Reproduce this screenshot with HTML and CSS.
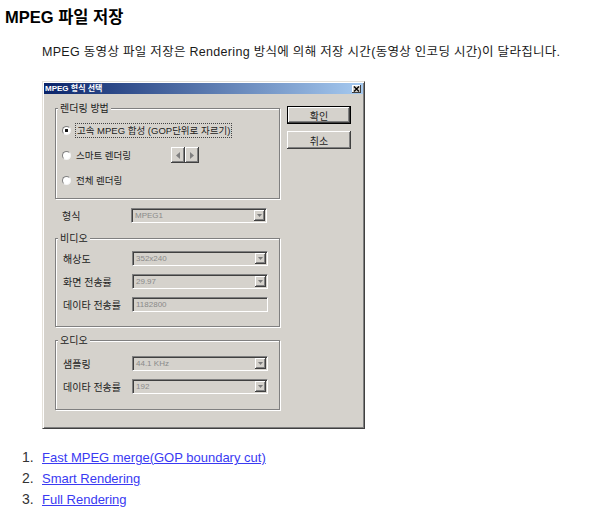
FILE: index.html
```html
<!DOCTYPE html>
<html lang="ko">
<head>
<meta charset="utf-8">
<title>MPEG 파일 저장</title>
<link rel="stylesheet" href="styles.css">
</head>
<body>
<h1 class="title">MPEG 파일 저장</h1>
<p class="intro">MPEG 동영상 파일 저장은 Rendering 방식에 의해 저장 시간(동영상 인코딩 시간)이 달라집니다.</p>

<div class="dialog">
  <div class="titlebar">
    <span class="titletext">MPEG 형식 선택</span>
    <span class="close"><svg width="7" height="6" viewBox="0 0 7 6"><path d="M1 .5 6 5.5M6 .5 1 5.5" stroke="#000" stroke-width="1.3"/></svg></span>
  </div>
  <div class="dbody">
    <div class="leftcol">
      <div class="group g1">
        <div class="legend">렌더링 방법</div>
        <div class="radios">
          <div class="radio-row"><span class="radio checked"></span><span class="rlabel focus">고속 MPEG 합성 (GOP단위로 자르기)</span></div>
          <div class="radio-row"><span class="radio"></span><span class="rlabel fixed">스마트 렌더링</span>
            <span class="spin">
              <span class="spinbtn"><svg width="4" height="7" viewBox="0 0 4 7"><path d="M4 0v7L0 3.5z" fill="#808080"/></svg></span>
              <span class="spinbtn"><svg width="4" height="7" viewBox="0 0 4 7"><path d="M0 0v7L4 3.5z" fill="#808080"/></svg></span>
            </span>
          </div>
          <div class="radio-row"><span class="radio"></span><span class="rlabel">전체 렌더링</span></div>
        </div>
      </div>

      <div class="frow fmt"><span class="flabel">형식</span><span class="combo"><span class="cval">MPEG1</span><span class="cbtn"><svg width="5" height="3" viewBox="0 0 5 3"><path d="M0 0h5L2.5 3z" fill="#7a7a7a"/></svg></span></span></div>

      <div class="group g2">
        <div class="legend">비디오</div>
        <div class="rows">
          <div class="frow"><span class="flabel">해상도</span><span class="combo"><span class="cval">352x240</span><span class="cbtn"><svg width="5" height="3" viewBox="0 0 5 3"><path d="M0 0h5L2.5 3z" fill="#7a7a7a"/></svg></span></span></div>
          <div class="frow"><span class="flabel">화면 전송률</span><span class="combo"><span class="cval">29.97</span><span class="cbtn"><svg width="5" height="3" viewBox="0 0 5 3"><path d="M0 0h5L2.5 3z" fill="#7a7a7a"/></svg></span></span></div>
          <div class="frow"><span class="flabel">데이타 전송률</span><span class="combo edit"><span class="cval">1182800</span></span></div>
        </div>
      </div>

      <div class="group g3">
        <div class="legend">오디오</div>
        <div class="rows">
          <div class="frow"><span class="flabel">샘플링</span><span class="combo"><span class="cval">44.1 KHz</span><span class="cbtn"><svg width="5" height="3" viewBox="0 0 5 3"><path d="M0 0h5L2.5 3z" fill="#7a7a7a"/></svg></span></span></div>
          <div class="frow"><span class="flabel">데이타 전송률</span><span class="combo"><span class="cval">192</span><span class="cbtn"><svg width="5" height="3" viewBox="0 0 5 3"><path d="M0 0h5L2.5 3z" fill="#7a7a7a"/></svg></span></span></div>
        </div>
      </div>
    </div>
    <div class="rightcol">
      <div class="btn default">확인</div>
      <div class="btn">취소</div>
    </div>
  </div>
</div>

<ol class="links">
  <li><a href="#fast">Fast MPEG merge(GOP boundary cut)</a></li>
  <li><a href="#smart">Smart Rendering</a></li>
  <li><a href="#full">Full Rendering</a></li>
</ol>
</body>
</html>
```

FILE: styles.css
```css
* { box-sizing: border-box; }

body {
  margin: 0;
  padding: 0;
  background: #fff;
  color: #111;
  font-family: "Liberation Sans", "Noto Sans CJK KR", sans-serif;
}

.title {
  margin: 0;
  padding: 7px 0 0 5px;
  height: 28px;
  font-size: 16.5px;
  line-height: 20px;
  font-weight: bold;
  color: #000;
}

.intro {
  margin: 16px 0 0;
  padding-left: 42px;
  height: 17px;
  font-size: 12.5px;
  line-height: 16px;
  letter-spacing: 0.3px;
  color: #1a1a1a;
  white-space: nowrap;
}

/* ---- dialog ---- */
.dialog {
  margin: 20px 0 0 42px;
  width: 323px;
  height: 348px;
  padding: 1px;
  background: #d5d2cc;
  border: 1px solid;
  border-color: #e4e1da #404040 #404040 #e4e1da;
  box-shadow: inset 1px 1px #fff, inset -1px -1px #808080;
  font-size: 10px;
  color: #222;
}

.titlebar {
  height: 11px;
  display: flex;
  align-items: center;
  justify-content: space-between;
  padding-left: 1px;
  background: linear-gradient(to right, #0a246a, #a6caf0);
}

.titletext {
  color: #fff;
  font-size: 8px;
  font-weight: bold;
  line-height: 10px;
}

.close {
  width: 9px;
  height: 8px;
  margin-right: 2px;
  display: flex;
  align-items: center;
  justify-content: center;
  background: #d5d2cc;
  box-shadow: inset -1px -1px #404040, inset 1px 1px #fff;
}

.dbody {
  display: flex;
  padding-left: 11px;
}

.leftcol {
  width: 225px;
}

.rightcol {
  margin-left: 7px;
  padding-top: 12px;
  display: flex;
  flex-direction: column;
  gap: 7px;
}

/* group boxes */
.group {
  border: 1px solid #808080;
  box-shadow: inset 1px 1px #fff, 1px 1px #fff;
}

.g1 { margin-top: 14px; height: 91px; }
.g2 { margin-top: 15px; height: 89px; }
.g3 { margin-top: 13px; height: 70px; }

.legend {
  width: fit-content;
  margin: -6px 0 0 2px;
  padding: 0 2px;
  height: 11px;
  line-height: 11px;
  background: #d5d2cc;
  white-space: nowrap;
}

.radios {
  display: flex;
  flex-direction: column;
  gap: 9px;
  padding: 8px 0 0 6px;
}

.radio-row {
  display: flex;
  align-items: center;
  height: 16px;
}

.radio {
  width: 9px;
  height: 9px;
  border-radius: 50%;
  border: 1px solid;
  border-color: #808080 #f4f4f4 #f4f4f4 #808080;
  background: #fff;
  flex: none;
}

.radio.checked {
  background: radial-gradient(circle, #111 1.4px, #fff 1.9px);
}

.rlabel {
  margin-left: 4px;
  padding: 0 1px;
  font-size: 9.5px;
  line-height: 13px;
  white-space: nowrap;
}

.rlabel.focus {
  border: 1px dotted #444;
}

.rlabel.fixed {
  width: 96px;
}

.spin {
  display: flex;
}

.spinbtn {
  width: 14px;
  height: 16px;
  display: flex;
  align-items: center;
  justify-content: center;
  background: #d5d2cc;
  box-shadow: inset -1px -1px #404040, inset 1px 1px #fff, inset -2px -2px #808080;
}

/* fields */
.frow {
  display: flex;
  align-items: center;
  height: 15px;
  padding-left: 7px;
}

.fmt { margin-top: 9px; }

.rows {
  display: flex;
  flex-direction: column;
  gap: 8px;
}

.g2 .rows { padding-top: 7px; }
.g3 .rows { padding-top: 10px; }

.flabel {
  width: 69px;
  white-space: nowrap;
}

.combo {
  width: 136px;
  height: 15px;
  display: flex;
  align-items: center;
  justify-content: space-between;
  padding: 1px 1px 1px 2px;
  border: 1px solid;
  border-color: #808080 #fff #fff #808080;
  box-shadow: inset 1px 1px #404040, inset -1px -1px #d5d2cc;
  background: #d5d2cc;
}

.cval {
  font-family: "Liberation Sans", sans-serif;
  font-size: 8px;
  line-height: 11px;
  color: #8a8a8a;
  padding-left: 1px;
}

.cbtn {
  width: 11px;
  height: 11px;
  display: flex;
  align-items: center;
  justify-content: center;
  background: #d5d2cc;
  box-shadow: inset -1px -1px #404040, inset 1px 1px #fff, inset -2px -2px #808080;
}

/* buttons */
.btn {
  width: 64px;
  height: 18px;
  display: flex;
  align-items: center;
  justify-content: center;
  background: #d5d2cc;
  box-shadow: inset -1px -1px #404040, inset 1px 1px #fff, inset -2px -2px #808080;
  font-size: 10px;
  color: #222;
}

.btn.default {
  border: 1px solid #000;
}

/* list */
.links {
  list-style: none;
  margin: 18px 0 0;
  padding: 0 0 0 22px;
  counter-reset: n;
}

.links li {
  counter-increment: n;
  font-size: 13px;
  line-height: 21px;
  white-space: nowrap;
}

.links li::before {
  content: counter(n) ".";
  display: inline-block;
  width: 20px;
  font-size: 14px;
  color: #333;
}

.links a {
  color: #3a3af2;
  text-decoration: underline;
}
```
